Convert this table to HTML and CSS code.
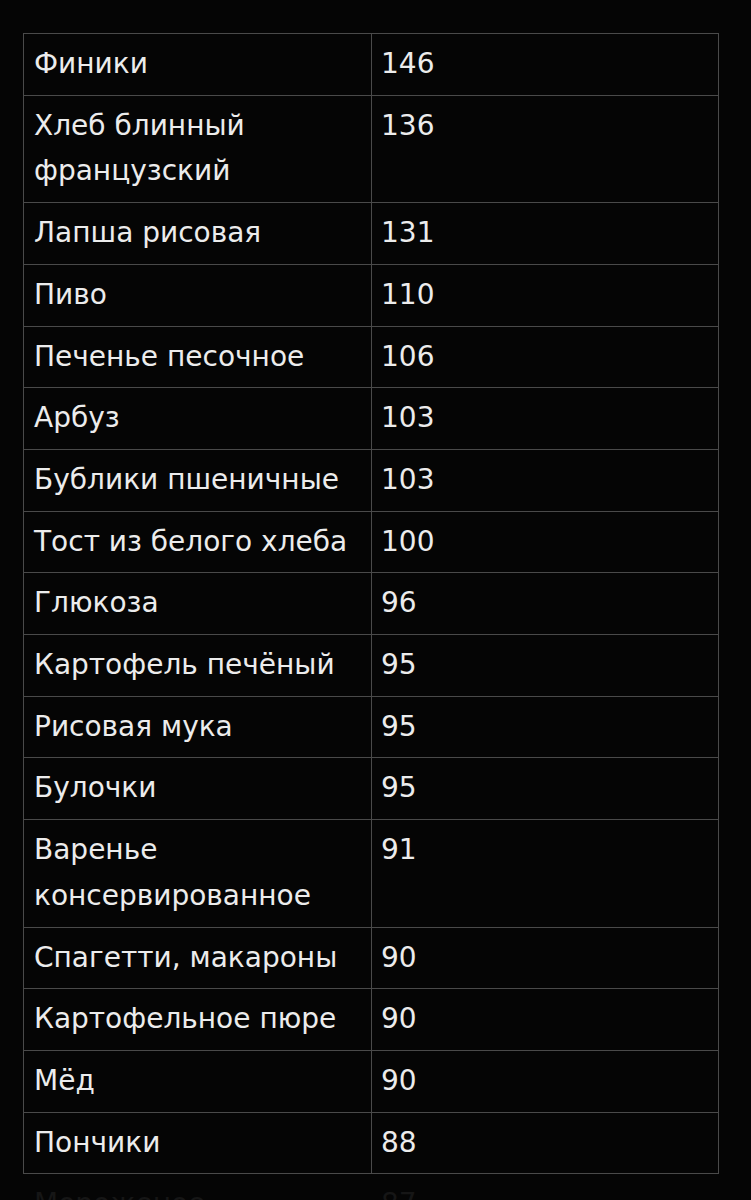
FILE: index.html
```html
<!DOCTYPE html>
<html lang="ru">
<head>
<meta charset="utf-8">
<link rel="stylesheet" href="styles.css">
</head>
<body>
<table class="gi">
<tbody>
<tr><td class="name">Финики</td><td class="val">146</td></tr>
<tr><td class="name">Хлеб блинный французский</td><td class="val">136</td></tr>
<tr><td class="name">Лапша рисовая</td><td class="val">131</td></tr>
<tr><td class="name">Пиво</td><td class="val">110</td></tr>
<tr><td class="name">Печенье песочное</td><td class="val">106</td></tr>
<tr><td class="name">Арбуз</td><td class="val">103</td></tr>
<tr><td class="name">Бублики пшеничные</td><td class="val">103</td></tr>
<tr><td class="name">Тост из белого хлеба</td><td class="val">100</td></tr>
<tr><td class="name">Глюкоза</td><td class="val">96</td></tr>
<tr><td class="name">Картофель печёный</td><td class="val">95</td></tr>
<tr><td class="name">Рисовая мука</td><td class="val">95</td></tr>
<tr><td class="name">Булочки</td><td class="val">95</td></tr>
<tr><td class="name">Варенье консервированное</td><td class="val">91</td></tr>
<tr><td class="name">Спагетти, макароны</td><td class="val">90</td></tr>
<tr><td class="name">Картофельное пюре</td><td class="val">90</td></tr>
<tr><td class="name">Мёд</td><td class="val">90</td></tr>
<tr><td class="name">Пончики</td><td class="val">88</td></tr>
<tr class="faded"><td class="name">Мороженое</td><td class="val">87</td></tr>
</tbody>
</table>
</body>
</html>
```

FILE: styles.css
```css
html, body {
  margin: 0;
  padding: 0;
  background: #050505;
}
body {
  height: 1200px;
  overflow: hidden;
  padding-top: 33px;
  box-sizing: border-box;
}
.gi {
  margin-left: 23px;
  width: 696px;
  border-collapse: collapse;
  table-layout: fixed;
  font-family: "DejaVu Sans", "Liberation Sans", sans-serif;
  font-size: 28px;
  line-height: 45.7px;
  color: #ececec;
}
.gi td {
  border: 1px solid #4a4a4a;
  padding: 7px 10px 8px 10px;
  vertical-align: top;
  text-align: left;
}
.gi td.name {
  width: 327px;
}
.gi td.val {
  padding-left: 9px;
}
.gi tr.faded td {
  border-color: transparent;
  border-top-color: #4a4a4a;
  color: #161616;
}
```
